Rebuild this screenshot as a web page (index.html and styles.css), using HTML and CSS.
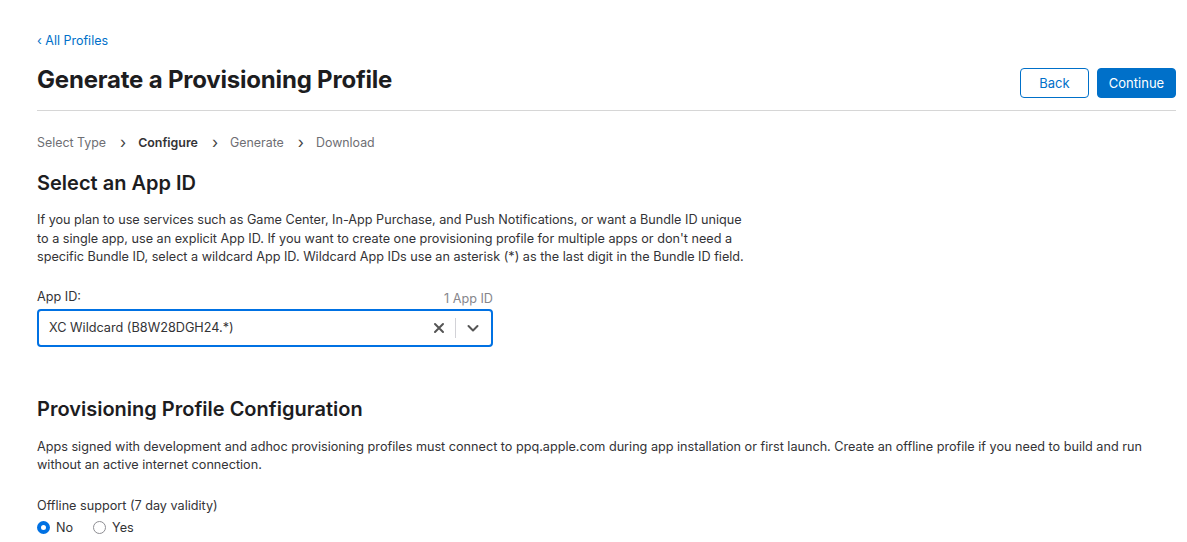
FILE: index.html
```html
<!DOCTYPE html>
<html>
<head>
<meta charset="utf-8">
<link rel="stylesheet" href="styles.css">
</head>
<body>
<div class="page">
  <a class="back-link" href="#">‹ All Profiles</a>
  <div class="title-row">
    <h1 class="title">Generate a Provisioning Profile</h1>
    <div class="actions">
      <button class="btn btn-outline">Back</button>
      <button class="btn btn-primary">Continue</button>
    </div>
  </div>
  <div class="steps">
    <span class="step">Select Type</span>
    <span class="chev">›</span>
    <span class="step active">Configure</span>
    <span class="chev">›</span>
    <span class="step">Generate</span>
    <span class="chev">›</span>
    <span class="step">Download</span>
  </div>

  <h2 class="section-title">Select an App ID</h2>
  <p class="desc narrow">If you plan to use services such as Game Center, In-App Purchase, and Push Notifications, or want a Bundle ID unique to a single app, use an explicit App ID. If you want to create one provisioning profile for multiple apps or don't need a specific Bundle ID, select a wildcard App ID. Wildcard App IDs use an asterisk (*) as the last digit in the Bundle ID field.</p>

  <div class="field">
    <div class="field-head">
      <span class="label">App ID:</span>
      <span class="count">1 App ID</span>
    </div>
    <div class="select">
      <span class="select-value">XC Wildcard (B8W28DGH24.*)</span>
      <span class="select-icons">
        <svg class="ico-x" width="12" height="12" viewBox="0 0 12 12"><path d="M2 2L10 10M10 2L2 10" stroke="#555" stroke-width="2" stroke-linecap="round"/></svg>
        <span class="sep"></span>
        <svg class="ico-chev" width="14" height="14" viewBox="0 0 14 14"><path d="M2.5 5L7 9.5L11.5 5" fill="none" stroke="#555" stroke-width="2" stroke-linecap="round" stroke-linejoin="round"/></svg>
      </span>
    </div>
  </div>

  <h2 class="section-title second">Provisioning Profile Configuration</h2>
  <p class="desc wide">Apps signed with development and adhoc provisioning profiles must connect to ppq.apple.com during app installation or first launch. Create an offline profile if you need to build and run without an active internet connection.</p>

  <div class="radio-group">
    <div class="label">Offline support (7 day validity)</div>
    <div class="radios">
      <label class="radio"><span class="dot checked"></span>No</label>
      <label class="radio"><span class="dot"></span>Yes</label>
    </div>
  </div>
</div>
</body>
</html>
```

FILE: styles.css
```css
* { box-sizing: border-box; }
html, body { margin: 0; padding: 0; background: #fff; }
body {
  font-family: Inter, "Noto Sans", "Liberation Sans", sans-serif;
  color: #333336;
  -webkit-font-smoothing: antialiased;
}
.page {
  padding: 33px 11px 0 37px;
}
.back-link {
  display: block;
  font-size: 12.5px;
  color: #0070c9;
  text-decoration: none;
  line-height: 16px;
}
.title-row {
  display: flex;
  align-items: flex-end;
  justify-content: space-between;
  padding: 17px 0 12px;
  border-bottom: 1px solid #d6d6d6;
}
.title {
  margin: 0;
  font-size: 24px;
  font-weight: 700;
  color: #1d1d1f;
  line-height: 28px;
  letter-spacing: -0.2px;
  align-self: flex-start;
}
.actions {
  display: flex;
  gap: 8px;
  margin-top: 2px;
}
.btn {
  font-family: inherit;
  font-size: 13px;
  height: 30px;
  border-radius: 4px;
  padding: 0 10px;
  cursor: pointer;
}
.btn-outline {
  width: 69px;
  background: #fff;
  color: #0070c9;
  border: 1px solid #0070c9;
}
.btn-primary {
  width: 79px;
  background: #0070c9;
  color: #fff;
  border: 1px solid #0070c9;
}
.steps {
  display: flex;
  align-items: center;
  font-size: 12.4px;
  color: #6e6e73;
  margin-top: 23px;
  line-height: 18px;
}
.step.active { color: #333336; font-weight: 600; }
.chev {
  font-size: 16px;
  color: #444;
  margin: 0 12px 0 14px;
  position: relative;
  top: -1px;
}
.section-title {
  margin: 19px 0 0;
  font-size: 20px;
  font-weight: 600;
  color: #1d1d1f;
  line-height: 24px;
}
.section-title.second { margin-top: 50px; }
.desc {
  margin: 16px 0 0;
  font-size: 12.65px;
  line-height: 18.5px;
  color: #333336;
}
.desc.narrow { max-width: 712px; }
.desc.wide { margin-top: 17px; }
.field {
  width: 456px;
  margin-top: 22px;
}
.field-head {
  display: flex;
  justify-content: space-between;
  align-items: flex-end;
  font-size: 12.65px;
  line-height: 16px;
}
.label { font-size: 12.65px; color: #333336; }
.count { color: #86868b; position: relative; top: 2px; }
.select {
  margin-top: 4px;
  height: 38px;
  border: 2px solid #0071e3;
  border-radius: 4px;
  display: flex;
  align-items: center;
  justify-content: space-between;
  padding: 0 10px;
  font-size: 12.7px;
  color: #333336;
}
.select-icons {
  display: flex;
  align-items: center;
}
.ico-x { margin-right: 10px; }
.sep {
  width: 1px;
  height: 20px;
  background: #d2d2d7;
  margin-right: 10px;
}
.ico-chev { margin-right: 1px; }
.radio-group { margin-top: 22px; }
.radio-group .label { line-height: 18px; }
.radios {
  display: flex;
  gap: 20px;
  margin-top: 5px;
  font-size: 12.65px;
}
.radio {
  display: flex;
  align-items: center;
  gap: 6px;
  line-height: 16px;
}
.dot {
  width: 13px;
  height: 13px;
  border-radius: 50%;
  border: 1px solid #8e8e93;
  background: #fff;
  display: inline-block;
}
.dot.checked {
  border: 4px solid #0071e3;
  background: #fff;
}
```
